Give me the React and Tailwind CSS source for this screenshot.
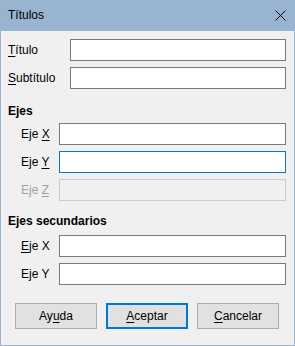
import React from "react";

const U = ({ children }) => (
  <span className="underline underline-offset-[2px] decoration-1">{children}</span>
);

function Field({ focused, disabled }) {
  const cls = disabled
    ? "border-[#cccccc] bg-[#f0f0f0]"
    : focused
    ? "border-[#0078d7] bg-white"
    : "border-[#7a7a7a] bg-white";
  return <div className={`flex-1 h-[22px] border ${cls}`} />;
}

function Btn({ children, def }) {
  return (
    <div
      className={`w-[82px] h-[26px] flex items-center justify-center bg-[#e1e1e1] ${
        def ? "border-2 border-[#0078d7]" : "border border-[#adadad]"
      }`}
    >
      {children}
    </div>
  );
}

export default function App() {
  return (
    <div
      className="w-[295px] h-[346px] flex flex-col bg-[#f0f0f0] border-x border-b border-[#99b4d1] text-[12px] leading-[15px] text-black"
      style={{ fontFamily: '"Liberation Sans", Arial, sans-serif' }}
    >
      <div className="h-[31px] shrink-0 bg-[#99b4d1] flex items-center justify-between pl-[8px] pr-[9px] -mx-px">
        <span className="text-[12px]">Títulos</span>
        <svg width="11" height="11" viewBox="0 0 11 11" className="block">
          <path d="M0.5 0.5 L10.5 10.5 M10.5 0.5 L0.5 10.5" stroke="#000" strokeWidth="1" />
        </svg>
      </div>
      <div className="flex flex-col pl-[7px] pr-[8px] pt-[8px]">
        <div className="flex items-center">
          <span className="w-[62px]"><U>T</U>ítulo</span>
          <Field />
        </div>
        <div className="flex items-center mt-[6px]">
          <span className="w-[62px]"><U>S</U>ubtítulo</span>
          <Field />
        </div>
        <div className="mt-[15px] font-bold h-[15px]">Ejes</div>
        <div className="flex items-center mt-[4px]">
          <span className="w-[51px] pl-[13px]">Eje <U>X</U></span>
          <Field />
        </div>
        <div className="flex items-center mt-[6px]">
          <span className="w-[51px] pl-[13px]">Eje <U>Y</U></span>
          <Field focused />
        </div>
        <div className="flex items-center mt-[6px]">
          <span className="w-[51px] pl-[13px] text-[#a0a0a0]">Eje <U>Z</U></span>
          <Field disabled />
        </div>
        <div className="mt-[13px] font-bold h-[15px]">Ejes secundarios</div>
        <div className="flex items-center mt-[6px]">
          <span className="w-[51px] pl-[13px]"><U>E</U>je X</span>
          <Field />
        </div>
        <div className="flex items-center mt-[6px]">
          <span className="w-[51px] pl-[13px]">E<U>j</U>e Y</span>
          <Field />
        </div>
      </div>
      <div className="flex gap-[9px] pl-[14px] mt-[18px]">
        <Btn>Ay<U>u</U>da</Btn>
        <Btn def><U>A</U>ceptar</Btn>
        <Btn><U>C</U>ancelar</Btn>
      </div>
    </div>
  );
}
